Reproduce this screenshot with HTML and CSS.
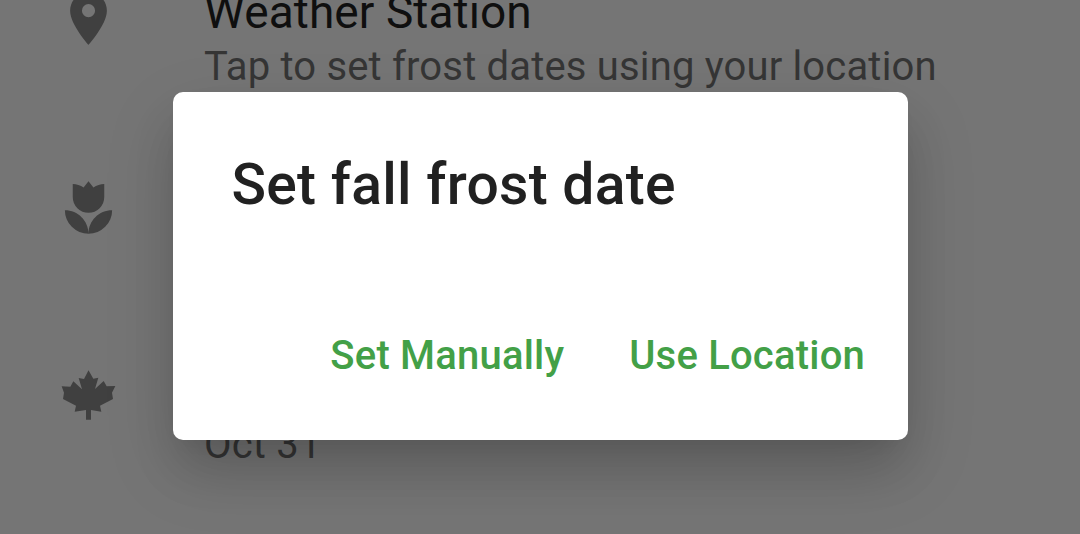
FILE: index.html
```html
<!DOCTYPE html>
<html lang="en">
<head>
<meta charset="utf-8">
<title>Frost dates</title>
<link rel="stylesheet" href="styles.css">
</head>
<body>
<main class="settings">
  <section class="row station">
    <svg class="icon" viewBox="0 0 24 24"><path d="M12 2C8.13 2 5 5.13 5 9c0 5.25 7 13 7 13s7-7.75 7-13c0-3.87-3.13-7-7-7zm0 9.5a2.5 2.5 0 0 1 0-5 2.5 2.5 0 0 1 0 5z"/></svg>
    <div class="copy"><div class="label">Weather Station</div><div class="detail">Tap to set frost dates using your location</div></div>
  </section>
  <section class="row spring">
    <svg class="icon" viewBox="0 0 24 24"><path d="M3 13a9 9 0 0 0 9 9c0-5-4.03-9-9-9m9 9a9 9 0 0 0 9-9c-5 0-9 4-9 9m6-19v5a6 6 0 0 1-6 6 6 6 0 0 1-6-6V3c.74 0 1.47.12 2.16.39.7.26 1.35.55 1.97.98L12 2l1.87 2.37c.62-.43 1.27-.72 1.97-.98C16.53 3.12 17.26 3 18 3"/></svg>
  </section>
  <section class="row fall">
    <svg class="icon" viewBox="21 15 189 189"><path d="M115.5 31 102 57 86 54l10 34-26-24-9 16-26-1 7 19-3 19 39 20-4 18 34-5v29h15v-29l31 5-4-18 39-20-3-19 10-20-26 1-9-16-26 24 10-34-15 3z"/></svg>
    <div class="copy"><div class="detail">Oct 31</div></div>
  </section>
</main>
<div class="scrim">
  <div class="dialog" role="dialog" aria-labelledby="title">
    <h1 class="title" id="title">Set fall frost date</h1>
    <div class="actions"><button class="action">Set Manually</button><button class="action">Use Location</button></div>
  </div>
</div>
</body>
</html>
```
FILE: styles.css
```css
* { box-sizing: border-box; }
body { margin: 0; height: 534px; overflow: hidden; background: #757575; font-family: Roboto, sans-serif; }
.settings { height: 534px; overflow: hidden; }
.row { display: flex; height: 189px; padding-left: 57px; }
.icon { flex: none; width: 63px; height: 63px; fill: #404040; }
.copy { margin-left: 84px; white-space: nowrap; }
.station { height: 176px; }
.station .icon { margin-top: -13px; }
.station .copy { margin-top: -15px; }
.label { font-size: 46px; line-height: 54px; color: #0f0f0f; letter-spacing: 0.08px; }
.detail { font-size: 40px; line-height: 56px; color: #353535; letter-spacing: 0.17px; }
.fall .copy { margin-top: 52px; }
.scrim { position: absolute; inset: 0; padding: 92.4px 172.5px 94.4px; }
.dialog { display: flex; flex-direction: column; justify-content: space-between; height: 347.2px; padding: 60px 26.5px 51.6px 59px; border-radius: 10px; background: #fff; box-shadow: 0 28px 72px 0 rgba(0,0,0,.13), 0 32px 48px -6px rgba(0,0,0,.13), 0 10px 18px -8px rgba(0,0,0,.05); }
.title { margin: 0; font-size: 57px; line-height: 66px; font-weight: 500; color: #212121; letter-spacing: 0.28px; white-space: nowrap; }
.actions { display: flex; justify-content: flex-end; gap: 33px; }
.action { padding: 0 16px; border: 0; background: none; font: 500 40px/64px Roboto, sans-serif; letter-spacing: 0.2px; color: #43a047; white-space: nowrap; }
```
